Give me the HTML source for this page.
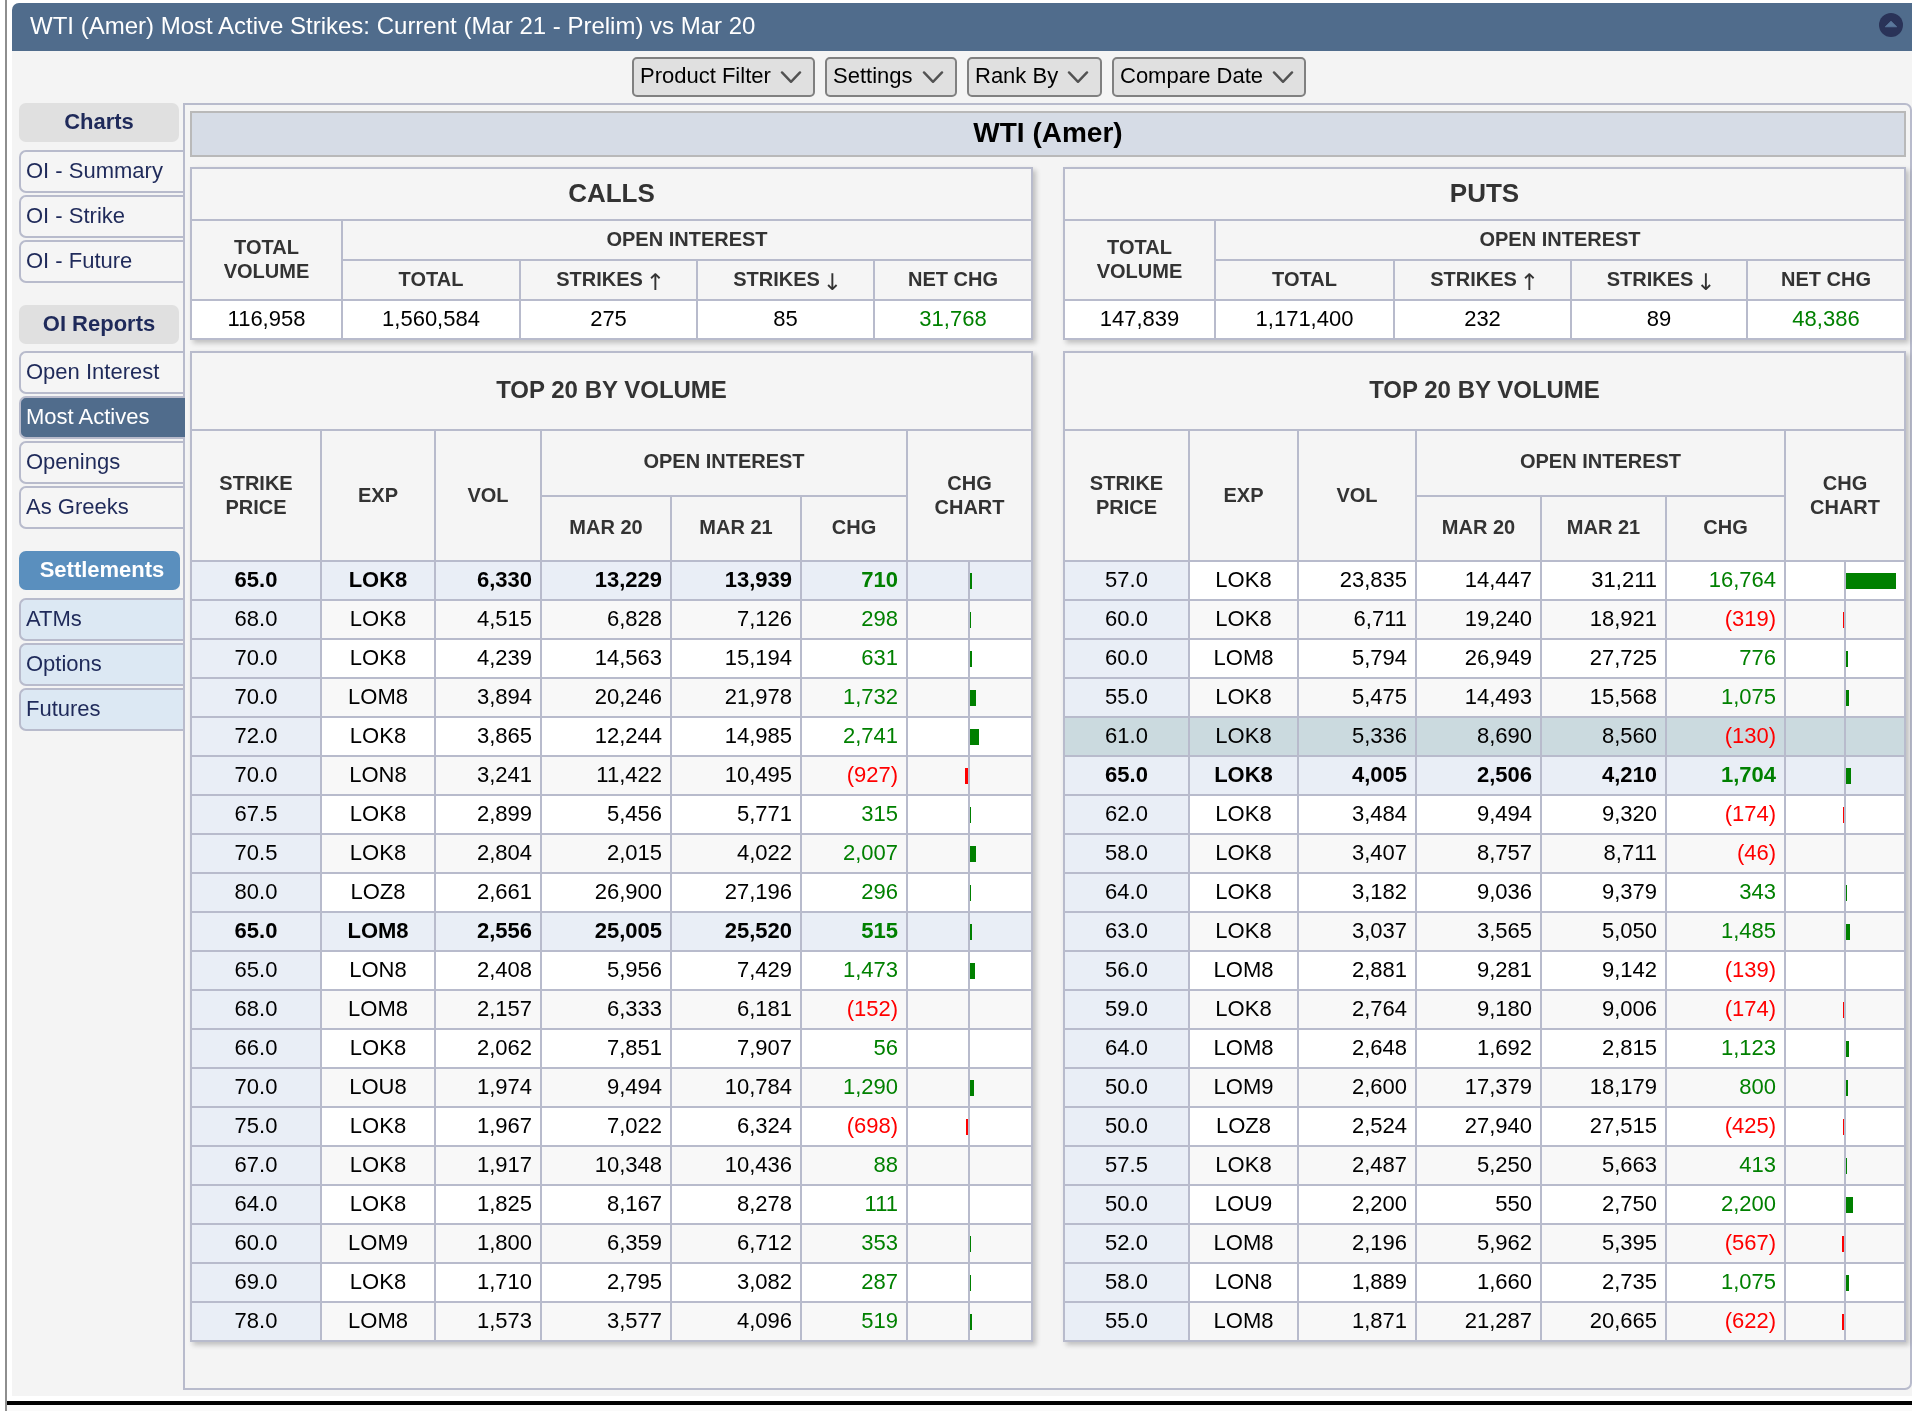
<!DOCTYPE html><html><head><meta charset="utf-8"><title>WTI (Amer) Most Active Strikes</title><style>
*{box-sizing:border-box;margin:0;padding:0}
html,body{width:1912px;height:1411px;overflow:hidden;background:#fff}
body{position:relative;font-family:"Liberation Sans",Arial,Helvetica,sans-serif;font-size:22px;color:#000}
#root{position:absolute;left:0;top:0;width:1912px;height:1411px;will-change:transform}
.abs{position:absolute}
#vline{left:5px;top:0;width:2px;height:1411px;background:#8e8e8e}
#hline{left:7px;top:1401px;width:1905px;height:4px;background:#000}
#below{left:7px;top:1405px;width:1905px;height:6px;background:#fafafa}
#panel{left:12px;top:3px;width:1900px;height:1393px;background:#f4f4f4;border-top-left-radius:7px}
#hdr{left:12px;top:3px;width:1900px;height:48px;background:#506c8c;border-top-left-radius:7px;color:#fff;font-size:24px;line-height:45px;padding-left:18px;white-space:nowrap}
#ico{left:1879px;top:13px;width:24px;height:24px}
.dd{top:57px;height:40px;border:2px solid #808080;border-radius:5px;background:#e0e0e0;font-size:22px;line-height:34px;padding-left:6px;white-space:nowrap}
.dd svg{position:absolute;top:11.6px;width:22px;height:14px}
.sh{left:19px;width:160px;height:39px;border-radius:7px;background:#e0e0e0;color:#1f2a5a;font-weight:bold;font-size:22px;line-height:38px;text-align:center}
.sh.blue{background:#5a8fbe;color:#fff;width:161px;padding-left:5px}
.tab{left:19px;width:166px;height:43px;border:2px solid #b8bbcc;border-right:none;border-radius:7px 0 0 7px;background:#f5f5f5;color:#1f2a5a;font-size:22px;line-height:37px;padding-left:5px;white-space:nowrap}
.tab.lb{background:#dce8f3}
.tab.on{background:#506c8c;color:#fff;border-color:#b8bbcc;z-index:3}
#content{left:183px;top:103px;width:1729px;height:1287px;border:2px solid #b8bbcc;border-radius:0 7px 7px 0;background:#f4f4f4}
#band{left:190px;top:111px;width:1716px;height:46px;border:2px solid #b9b9b9;background:#d6dce6;font-weight:bold;font-size:28px;line-height:40px;text-align:center;color:#000}
table{position:absolute;border-collapse:separate;border-spacing:0;table-layout:fixed;width:843px;border-top:2px solid #b8bbcc;border-left:2px solid #b8bbcc;box-shadow:3px 3px 5px rgba(0,0,0,.22);background:#f5f5f5}
td,th{border-right:2px solid #b8bbcc;border-bottom:2px solid #b8bbcc;overflow:hidden;white-space:nowrap;vertical-align:middle;padding:0 0 2px 0}
th{color:#333;font-weight:bold;font-size:20px;line-height:24px;text-align:center;background:#f5f5f5}
th.u{padding-bottom:4px}
.ar{font-family:'DejaVu Sans',sans-serif;font-weight:normal;font-size:23px;line-height:0;position:relative;top:4px;margin:0 -4px 0 -3px}
th.t26{font-size:26px;height:52px;color:#333}
th.t24{font-size:24px;height:78px;color:#333}
td{font-size:22px;line-height:25px;height:39px;background:#fff}
.sum td{text-align:center}
.g{color:#008000}.r{color:#f00}
tr.a td{background:#f8f8f8}
tr td.s{background:#e9eef6}
tr.b td{background:#e9eef6;font-weight:bold}
tr.h td{background:#cbdadf}
td.c{text-align:center}
td.n{text-align:right;padding:0 8px 2px 0}
td.cl,td.cr{position:relative}
td.cl i,td.cr i{position:absolute;top:11px;height:16px;display:block}
td.cr i{left:0;background:#008000}
td.cl i{right:0;background:#f00}
</style></head><body>
<div id="root"><div id="vline" class="abs"></div><div id="hline" class="abs"></div><div id="below" class="abs"></div>
<div id="panel" class="abs"></div>
<div id="hdr" class="abs">WTI (Amer) Most Active Strikes: Current (Mar 21 - Prelim) vs Mar 20</div>
<svg id="ico" class="abs" viewBox="0 0 24 24"><circle cx="12" cy="12" r="12" fill="#2a3358"/><path d="M6.3 13.8 L12 8.2 L17.7 13.8 Z" fill="#5b789c" stroke="#5b789c" stroke-width="0.8" stroke-linejoin="round"/></svg>
<div class="dd abs" style="left:632px;width:183px">Product Filter<svg style="left:146.1px" viewBox="0 0 22 14"><path d="M2 1.4 L11 10.8 L20 1.4" fill="none" stroke="#525252" stroke-width="2.4" stroke-linecap="round" stroke-linejoin="round"/></svg></div>
<div class="dd abs" style="left:825px;width:132px">Settings<svg style="left:94.9px" viewBox="0 0 22 14"><path d="M2 1.4 L11 10.8 L20 1.4" fill="none" stroke="#525252" stroke-width="2.4" stroke-linecap="round" stroke-linejoin="round"/></svg></div>
<div class="dd abs" style="left:967px;width:135px">Rank By<svg style="left:97.8px" viewBox="0 0 22 14"><path d="M2 1.4 L11 10.8 L20 1.4" fill="none" stroke="#525252" stroke-width="2.4" stroke-linecap="round" stroke-linejoin="round"/></svg></div>
<div class="dd abs" style="left:1112px;width:194px">Compare Date<svg style="left:158.0px" viewBox="0 0 22 14"><path d="M2 1.4 L11 10.8 L20 1.4" fill="none" stroke="#525252" stroke-width="2.4" stroke-linecap="round" stroke-linejoin="round"/></svg></div>
<div class="sh abs" style="top:103px">Charts</div>
<div class="tab abs" style="top:150px">OI - Summary</div>
<div class="tab abs" style="top:195px">OI - Strike</div>
<div class="tab abs" style="top:240px">OI - Future</div>
<div class="sh abs" style="top:305px">OI Reports</div>
<div class="tab abs" style="top:351px">Open Interest</div>
<div class="tab abs on" style="top:396px">Most Actives</div>
<div class="tab abs" style="top:441px">Openings</div>
<div class="tab abs" style="top:486px">As Greeks</div>
<div class="sh blue abs" style="top:551px">Settlements</div>
<div class="tab lb abs" style="top:598px">ATMs</div>
<div class="tab lb abs" style="top:643px">Options</div>
<div class="tab lb abs" style="top:688px">Futures</div>
<div id="content" class="abs"></div>
<div id="band" class="abs">WTI (Amer)</div>
<table class="sum" style="left:190px;top:167px">
<colgroup><col style="width:151px"><col style="width:178px"><col style="width:177px"><col style="width:177px"><col style="width:158px"></colgroup>
<tr><th class="t26" colspan="5">CALLS</th></tr>
<tr><th rowspan="2" style="height:80px">TOTAL<br>VOLUME</th><th colspan="4" style="height:40px">OPEN INTEREST</th></tr>
<tr><th style="height:40px">TOTAL</th><th>STRIKES <span class="ar">&#8593;</span></th><th>STRIKES <span class="ar">&#8595;</span></th><th>NET CHG</th></tr>
<tr><td>116,958</td><td>1,560,584</td><td>275</td><td>85</td><td class="g">31,768</td></tr>
</table>
<table class="sum" style="left:1063px;top:167px">
<colgroup><col style="width:151px"><col style="width:179px"><col style="width:177px"><col style="width:176px"><col style="width:158px"></colgroup>
<tr><th class="t26" colspan="5">PUTS</th></tr>
<tr><th rowspan="2" style="height:80px">TOTAL<br>VOLUME</th><th colspan="4" style="height:40px">OPEN INTEREST</th></tr>
<tr><th style="height:40px">TOTAL</th><th>STRIKES <span class="ar">&#8593;</span></th><th>STRIKES <span class="ar">&#8595;</span></th><th>NET CHG</th></tr>
<tr><td>147,839</td><td>1,171,400</td><td>232</td><td>89</td><td class="g">48,386</td></tr>
</table>
<table class="top" style="left:190px;top:351px"><colgroup><col style="width:130px"><col style="width:114px"><col style="width:106px"><col style="width:130px"><col style="width:130px"><col style="width:106px"><col style="width:62px"><col style="width:63px"></colgroup>
<tr><th class="t24" colspan="8">TOP 20 BY VOLUME</th></tr>
<tr><th rowspan="2" style="height:131px">STRIKE<br>PRICE</th><th rowspan="2">EXP</th><th rowspan="2">VOL</th><th class="u" colspan="3" style="height:66px">OPEN INTEREST</th><th rowspan="2" colspan="2">CHG<br>CHART</th></tr>
<tr><th class="u" style="height:65px">MAR 20</th><th class="u">MAR 21</th><th class="u">CHG</th></tr>
<tr class="b"><td class="c s">65.0</td><td class="c">LOK8</td><td class="n">6,330</td><td class="n">13,229</td><td class="n">13,939</td><td class="n g">710</td><td class="cl"></td><td class="cr"><i style="width:2px"></i></td></tr>
<tr class="a"><td class="c s">68.0</td><td class="c">LOK8</td><td class="n">4,515</td><td class="n">6,828</td><td class="n">7,126</td><td class="n g">298</td><td class="cl"></td><td class="cr"><i style="width:1px"></i></td></tr>
<tr class=""><td class="c s">70.0</td><td class="c">LOK8</td><td class="n">4,239</td><td class="n">14,563</td><td class="n">15,194</td><td class="n g">631</td><td class="cl"></td><td class="cr"><i style="width:2px"></i></td></tr>
<tr class="a"><td class="c s">70.0</td><td class="c">LOM8</td><td class="n">3,894</td><td class="n">20,246</td><td class="n">21,978</td><td class="n g">1,732</td><td class="cl"></td><td class="cr"><i style="width:6px"></i></td></tr>
<tr class=""><td class="c s">72.0</td><td class="c">LOK8</td><td class="n">3,865</td><td class="n">12,244</td><td class="n">14,985</td><td class="n g">2,741</td><td class="cl"></td><td class="cr"><i style="width:9px"></i></td></tr>
<tr class="a"><td class="c s">70.0</td><td class="c">LON8</td><td class="n">3,241</td><td class="n">11,422</td><td class="n">10,495</td><td class="n r">(927)</td><td class="cl"><i style="width:3px"></i></td><td class="cr"></td></tr>
<tr class=""><td class="c s">67.5</td><td class="c">LOK8</td><td class="n">2,899</td><td class="n">5,456</td><td class="n">5,771</td><td class="n g">315</td><td class="cl"></td><td class="cr"><i style="width:1px"></i></td></tr>
<tr class="a"><td class="c s">70.5</td><td class="c">LOK8</td><td class="n">2,804</td><td class="n">2,015</td><td class="n">4,022</td><td class="n g">2,007</td><td class="cl"></td><td class="cr"><i style="width:6px"></i></td></tr>
<tr class=""><td class="c s">80.0</td><td class="c">LOZ8</td><td class="n">2,661</td><td class="n">26,900</td><td class="n">27,196</td><td class="n g">296</td><td class="cl"></td><td class="cr"><i style="width:1px"></i></td></tr>
<tr class="a b"><td class="c s">65.0</td><td class="c">LOM8</td><td class="n">2,556</td><td class="n">25,005</td><td class="n">25,520</td><td class="n g">515</td><td class="cl"></td><td class="cr"><i style="width:2px"></i></td></tr>
<tr class=""><td class="c s">65.0</td><td class="c">LON8</td><td class="n">2,408</td><td class="n">5,956</td><td class="n">7,429</td><td class="n g">1,473</td><td class="cl"></td><td class="cr"><i style="width:5px"></i></td></tr>
<tr class="a"><td class="c s">68.0</td><td class="c">LOM8</td><td class="n">2,157</td><td class="n">6,333</td><td class="n">6,181</td><td class="n r">(152)</td><td class="cl"></td><td class="cr"></td></tr>
<tr class=""><td class="c s">66.0</td><td class="c">LOK8</td><td class="n">2,062</td><td class="n">7,851</td><td class="n">7,907</td><td class="n g">56</td><td class="cl"></td><td class="cr"></td></tr>
<tr class="a"><td class="c s">70.0</td><td class="c">LOU8</td><td class="n">1,974</td><td class="n">9,494</td><td class="n">10,784</td><td class="n g">1,290</td><td class="cl"></td><td class="cr"><i style="width:4px"></i></td></tr>
<tr class=""><td class="c s">75.0</td><td class="c">LOK8</td><td class="n">1,967</td><td class="n">7,022</td><td class="n">6,324</td><td class="n r">(698)</td><td class="cl"><i style="width:2px"></i></td><td class="cr"></td></tr>
<tr class="a"><td class="c s">67.0</td><td class="c">LOK8</td><td class="n">1,917</td><td class="n">10,348</td><td class="n">10,436</td><td class="n g">88</td><td class="cl"></td><td class="cr"></td></tr>
<tr class=""><td class="c s">64.0</td><td class="c">LOK8</td><td class="n">1,825</td><td class="n">8,167</td><td class="n">8,278</td><td class="n g">111</td><td class="cl"></td><td class="cr"></td></tr>
<tr class="a"><td class="c s">60.0</td><td class="c">LOM9</td><td class="n">1,800</td><td class="n">6,359</td><td class="n">6,712</td><td class="n g">353</td><td class="cl"></td><td class="cr"><i style="width:1px"></i></td></tr>
<tr class=""><td class="c s">69.0</td><td class="c">LOK8</td><td class="n">1,710</td><td class="n">2,795</td><td class="n">3,082</td><td class="n g">287</td><td class="cl"></td><td class="cr"><i style="width:1px"></i></td></tr>
<tr class="a"><td class="c s">78.0</td><td class="c">LOM8</td><td class="n">1,573</td><td class="n">3,577</td><td class="n">4,096</td><td class="n g">519</td><td class="cl"></td><td class="cr"><i style="width:2px"></i></td></tr>
</table>
<table class="top" style="left:1063px;top:351px"><colgroup><col style="width:125px"><col style="width:109px"><col style="width:118px"><col style="width:125px"><col style="width:125px"><col style="width:119px"><col style="width:60px"><col style="width:60px"></colgroup>
<tr><th class="t24" colspan="8">TOP 20 BY VOLUME</th></tr>
<tr><th rowspan="2" style="height:131px">STRIKE<br>PRICE</th><th rowspan="2">EXP</th><th rowspan="2">VOL</th><th class="u" colspan="3" style="height:66px">OPEN INTEREST</th><th rowspan="2" colspan="2">CHG<br>CHART</th></tr>
<tr><th class="u" style="height:65px">MAR 20</th><th class="u">MAR 21</th><th class="u">CHG</th></tr>
<tr class=""><td class="c s">57.0</td><td class="c">LOK8</td><td class="n">23,835</td><td class="n">14,447</td><td class="n">31,211</td><td class="n g">16,764</td><td class="cl"></td><td class="cr"><i style="width:50px"></i></td></tr>
<tr class="a"><td class="c s">60.0</td><td class="c">LOK8</td><td class="n">6,711</td><td class="n">19,240</td><td class="n">18,921</td><td class="n r">(319)</td><td class="cl"><i style="width:1px"></i></td><td class="cr"></td></tr>
<tr class=""><td class="c s">60.0</td><td class="c">LOM8</td><td class="n">5,794</td><td class="n">26,949</td><td class="n">27,725</td><td class="n g">776</td><td class="cl"></td><td class="cr"><i style="width:2px"></i></td></tr>
<tr class="a"><td class="c s">55.0</td><td class="c">LOK8</td><td class="n">5,475</td><td class="n">14,493</td><td class="n">15,568</td><td class="n g">1,075</td><td class="cl"></td><td class="cr"><i style="width:3px"></i></td></tr>
<tr class="h"><td class="c s">61.0</td><td class="c">LOK8</td><td class="n">5,336</td><td class="n">8,690</td><td class="n">8,560</td><td class="n r">(130)</td><td class="cl"></td><td class="cr"></td></tr>
<tr class="a b"><td class="c s">65.0</td><td class="c">LOK8</td><td class="n">4,005</td><td class="n">2,506</td><td class="n">4,210</td><td class="n g">1,704</td><td class="cl"></td><td class="cr"><i style="width:5px"></i></td></tr>
<tr class=""><td class="c s">62.0</td><td class="c">LOK8</td><td class="n">3,484</td><td class="n">9,494</td><td class="n">9,320</td><td class="n r">(174)</td><td class="cl"><i style="width:1px"></i></td><td class="cr"></td></tr>
<tr class="a"><td class="c s">58.0</td><td class="c">LOK8</td><td class="n">3,407</td><td class="n">8,757</td><td class="n">8,711</td><td class="n r">(46)</td><td class="cl"></td><td class="cr"></td></tr>
<tr class=""><td class="c s">64.0</td><td class="c">LOK8</td><td class="n">3,182</td><td class="n">9,036</td><td class="n">9,379</td><td class="n g">343</td><td class="cl"></td><td class="cr"><i style="width:1px"></i></td></tr>
<tr class="a"><td class="c s">63.0</td><td class="c">LOK8</td><td class="n">3,037</td><td class="n">3,565</td><td class="n">5,050</td><td class="n g">1,485</td><td class="cl"></td><td class="cr"><i style="width:4px"></i></td></tr>
<tr class=""><td class="c s">56.0</td><td class="c">LOM8</td><td class="n">2,881</td><td class="n">9,281</td><td class="n">9,142</td><td class="n r">(139)</td><td class="cl"></td><td class="cr"></td></tr>
<tr class="a"><td class="c s">59.0</td><td class="c">LOK8</td><td class="n">2,764</td><td class="n">9,180</td><td class="n">9,006</td><td class="n r">(174)</td><td class="cl"><i style="width:1px"></i></td><td class="cr"></td></tr>
<tr class=""><td class="c s">64.0</td><td class="c">LOM8</td><td class="n">2,648</td><td class="n">1,692</td><td class="n">2,815</td><td class="n g">1,123</td><td class="cl"></td><td class="cr"><i style="width:3px"></i></td></tr>
<tr class="a"><td class="c s">50.0</td><td class="c">LOM9</td><td class="n">2,600</td><td class="n">17,379</td><td class="n">18,179</td><td class="n g">800</td><td class="cl"></td><td class="cr"><i style="width:2px"></i></td></tr>
<tr class=""><td class="c s">50.0</td><td class="c">LOZ8</td><td class="n">2,524</td><td class="n">27,940</td><td class="n">27,515</td><td class="n r">(425)</td><td class="cl"><i style="width:1px"></i></td><td class="cr"></td></tr>
<tr class="a"><td class="c s">57.5</td><td class="c">LOK8</td><td class="n">2,487</td><td class="n">5,250</td><td class="n">5,663</td><td class="n g">413</td><td class="cl"></td><td class="cr"><i style="width:1px"></i></td></tr>
<tr class=""><td class="c s">50.0</td><td class="c">LOU9</td><td class="n">2,200</td><td class="n">550</td><td class="n">2,750</td><td class="n g">2,200</td><td class="cl"></td><td class="cr"><i style="width:7px"></i></td></tr>
<tr class="a"><td class="c s">52.0</td><td class="c">LOM8</td><td class="n">2,196</td><td class="n">5,962</td><td class="n">5,395</td><td class="n r">(567)</td><td class="cl"><i style="width:2px"></i></td><td class="cr"></td></tr>
<tr class=""><td class="c s">58.0</td><td class="c">LON8</td><td class="n">1,889</td><td class="n">1,660</td><td class="n">2,735</td><td class="n g">1,075</td><td class="cl"></td><td class="cr"><i style="width:3px"></i></td></tr>
<tr class="a"><td class="c s">55.0</td><td class="c">LOM8</td><td class="n">1,871</td><td class="n">21,287</td><td class="n">20,665</td><td class="n r">(622)</td><td class="cl"><i style="width:2px"></i></td><td class="cr"></td></tr>
</table>
</div></body></html>
